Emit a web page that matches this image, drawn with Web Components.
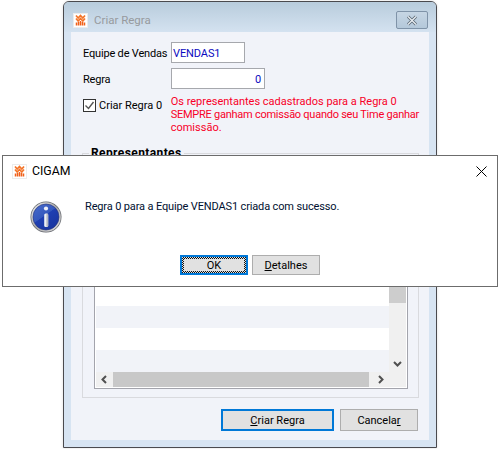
<!DOCTYPE html>
<html lang="pt-BR">
<head>
<meta charset="utf-8">
<title>Criar Regra</title>
<style>
  html, body { margin: 0; height: 100%; background: #fff; overflow: hidden; }
  body { font: 11px Roboto, "Liberation Sans", sans-serif; color: #000; }
</style>
</head>
<body>
<app-desktop>
  <rule-window>
    <rule-form></rule-form>
  </rule-window>
  <message-dialog title-text="CIGAM">Regra 0 para a Equipe VENDAS1 criada com sucesso.</message-dialog>
</app-desktop>

<script>
// Logo CIGAM, dipakai di dua title bar
const LOGO = `
  <svg width="15" height="15" viewBox="0 0 15 15" aria-hidden="true">
    <rect x="0.5" y="0.5" width="14" height="14" fill="#fff" stroke="#ececec"/>
    <path d="M3 2.500l2.200 2.500 2.300-2.500 2.300 2.500 2.200-2.500M3 5.500l2.200 2.500 2.300-2.500 2.300 2.500 2.200-2.500" fill="none" stroke="#f47428" stroke-width="1.700"/>
    <path d="M3.500 12.500V9.500M5.500 12.500V9M7.500 12.500V8M9.500 12.500V9M11.500 12.500V9.500" fill="none" stroke="#f0601a" stroke-width="1.500"/>
  </svg>`;

class AppDesktop extends HTMLElement {
  constructor() {
    super();
    this.attachShadow({ mode: 'open' });
  }

  connectedCallback() {
    this.shadowRoot.innerHTML = `
      <style>
        :host { display: block; position: relative; width: 500px; height: 449px; background: #fff; overflow: hidden; }
      </style>
      <slot></slot>
    `;
  }
}

class RuleWindow extends HTMLElement {
  constructor() {
    super();
    this.attachShadow({ mode: 'open' });
  }

  connectedCallback() {
    this.shadowRoot.innerHTML = `
      <style>
        :host {
          display: flex;
          flex-direction: column;
          position: absolute;
          left: 63px;
          top: 1px;
          width: 372px;
          height: 445px;
          border: 1px solid #4a4a4e;
          border-radius: 6px 6px 0 0;
          background: #d7e4f2;
          box-shadow: 0 0 3px rgba(0, 0, 0, .14);
        }
        .title {
          display: flex;
          align-items: center;
          box-sizing: border-box;
          height: 30px;
          padding: 6px 8px 0 9px;
          border-radius: 5px 5px 0 0;
          background: linear-gradient(#b8ccdc, #d4e2f0);
          color: #979a9e;
          font-size: 11.5px;
        }
        .title svg { margin-right: 6px; }
        .title span { flex: 1; }
        .close {
          display: flex;
          align-items: center;
          justify-content: center;
          box-sizing: border-box;
          width: 32px;
          height: 18px;
          border: 1px solid #7f93a8;
          border-radius: 2px;
          background: linear-gradient(#c6d6e4, #b4c8da);
        }
        .client { flex: 1; margin: 0 7px 7px; background: #f1f3f9; min-height: 0; display: flex; }
      </style>
      <div class="title">
        ${LOGO}
        <span>Criar Regra</span>
        <div class="close">
          <svg width="14" height="11" viewBox="0 0 14 11" style="margin:0">
            <path d="M3 1.500l8 8M11 1.500l-8 8" stroke="#5d6a76" stroke-width="3"/>
            <path d="M3 1.500l8 8M11 1.500l-8 8" stroke="#eef2f6" stroke-width="1.200"/>
          </svg>
        </div>
      </div>
      <div class="client"><slot></slot></div>
    `;
  }
}

class RuleForm extends HTMLElement {
  constructor() {
    super();
    this.attachShadow({ mode: 'open' });
  }

  connectedCallback() {
    this.shadowRoot.innerHTML = `
      <style>
        :host {
          display: flex;
          flex-direction: column;
          flex: 1;
          min-width: 0;
          box-sizing: border-box;
          padding: 10px 10px 9px 11px;
        }
        .row { display: flex; align-items: center; padding-left: 1px; height: 21px; margin-bottom: 5px; }
        .row label { width: 88px; letter-spacing: -.18px; padding-top: 1px; }
        .warn { display: flex; align-items: flex-start; padding-left: 1px; height: 39px; margin-top: 1px; }
        .warn p { margin: 0; white-space: nowrap; color: #f80028; line-height: 13px; }
        .warn p .tight { letter-spacing: -.25px; }
        .warn x-check { width: 88px; margin-top: 4px; }
        x-group { margin-top: 12px; flex: 1; min-height: 0; }
        .actions { display: flex; justify-content: flex-end; gap: 6px; margin-top: 11px; padding-right: 1px; }
      </style>
      <div class="row"><label>Equipe de Vendas</label><x-input width="74" value="VENDAS1"></x-input></div>
      <div class="row"><label>Regra</label><x-input width="94" value="0" align="right"></x-input></div>
      <div class="warn">
        <x-check>Criar Regra 0</x-check>
        <p>Os representantes cadastrados para a Regra 0<br><span class="tight">SEMPRE ganham comissão quando seu Time ganhar</span><br>comissão.</p>
      </div>
      <x-group label="Representantes"><x-grid></x-grid></x-group>
      <div class="actions">
        <x-button width="113" height="22" default><u>C</u>riar Regra</x-button>
        <x-button width="78" height="22">Cancela<u>r</u></x-button>
      </div>
    `;
  }
}

class XInput extends HTMLElement {
  constructor() {
    super();
    this.attachShadow({ mode: 'open' });
  }

  connectedCallback() {
    const width = this.getAttribute('width') || '74';
    const align = this.getAttribute('align') || 'left';
    this.shadowRoot.innerHTML = `
      <style>
        :host {
          display: block;
          box-sizing: border-box;
          width: ${width}px;
          height: 21px;
          padding: 0 3px 0 1px;
          border: 1px solid #a6a8ad;
          background: #fff;
          color: #0a0ac0;
          line-height: 21px;
          letter-spacing: -.1px;
          text-align: ${align};
        }
      </style>
      ${this.getAttribute('value') || ''}
    `;
  }
}

class XCheck extends HTMLElement {
  constructor() {
    super();
    this.attachShadow({ mode: 'open' });
  }

  connectedCallback() {
    this.shadowRoot.innerHTML = `
      <style>
        :host { display: flex; align-items: center; gap: 3px; height: 13px; }
        svg { flex: none; }
      </style>
      <svg width="13" height="13" viewBox="0 0 13 13" aria-hidden="true">
        <rect x="0.500" y="0.500" width="12" height="12" fill="#fff" stroke="#333"/>
        <path d="M2.500 6.500l3 3 5-6.500" fill="none" stroke="#555" stroke-width="1.400"/>
      </svg>
      <slot></slot>
    `;
  }
}

class XGroup extends HTMLElement {
  constructor() {
    super();
    this.attachShadow({ mode: 'open' });
  }

  connectedCallback() {
    this.shadowRoot.innerHTML = `
      <style>
        :host { display: flex; }
        fieldset {
          flex: 1;
          min-width: 0;
          margin: 0;
          padding: 6px 10px 8px 11px;
          border: 1px solid #d9dade;
          display: flex;
        }
        legend { padding: 0 2px; margin-left: -5px; font-size: 12px; font-weight: 700; letter-spacing: .4px; line-height: 14px; }
      </style>
      <fieldset>
        <legend>${this.getAttribute('label') || ''}</legend>
        <slot></slot>
      </fieldset>
    `;
  }
}

class XGrid extends HTMLElement {
  constructor() {
    super();
    this.attachShadow({ mode: 'open' });
  }

  connectedCallback() {
    // Baris selang-seling, dihitung dari bawah
    const rows = Array.from({ length: 10 }, (_, i) => `<div class="line ${i % 2 ? '' : 'odd'}"></div>`).join('');
    this.shadowRoot.innerHTML = `
      <style>
        :host {
          display: grid;
          grid-template-columns: 1fr 17px;
          grid-template-rows: 1fr 15px;
          flex: 1;
          min-width: 0;
          padding: 1px;
          border: 1px solid #a3a4ac;
          background: #fff;
        }
        .rows { display: flex; flex-direction: column; justify-content: flex-end; overflow: hidden; min-height: 0; }
        .line { flex: none; height: 22px; background: #f1f3f8; }
        .line.odd { background: #fff; }
        .corner { background: #f0f0f0; }
      </style>
      <div class="rows">${rows}</div>
      <x-scroll axis="v" before="0" after="52"></x-scroll>
      <x-scroll axis="h" before="0" after="3"></x-scroll>
      <div class="corner"></div>
    `;
  }
}

class XScroll extends HTMLElement {
  constructor() {
    super();
    this.attachShadow({ mode: 'open' });
  }

  connectedCallback() {
    const vertical = this.getAttribute('axis') === 'v';
    const before = this.getAttribute('before') || 0;
    const after = this.getAttribute('after') || 0;
    const chevron = (d) => `<svg width="9" height="9" viewBox="0 0 9 9"><path d="${d}" fill="none" stroke="#505050" stroke-width="2"/></svg>`;
    const first = vertical ? chevron('M1 6l3.500-3.500L8 6') : chevron('M6 1L2.500 4.500 6 8');
    const last = vertical ? chevron('M1 3l3.500 3.500L8 3') : chevron('M3 1l3.500 3.500L3 8');
    this.shadowRoot.innerHTML = `
      <style>
        :host {
          display: flex;
          flex-direction: ${vertical ? 'column' : 'row'};
          background: #f0f0f0;
          min-width: 0;
          min-height: 0;
        }
        .btn { flex: none; display: flex; align-items: center; justify-content: center; ${vertical ? 'height: 17px' : 'width: 17px'}; }
        .thumb { flex: 1; background: ${vertical ? '#cdcdcd' : '#c8c8c8'}; margin: ${vertical ? `${before}px 0 ${after}px` : `0 ${after}px 0 ${before}px`}; }
      </style>
      <div class="btn">${first}</div>
      <div class="thumb"></div>
      <div class="btn">${last}</div>
    `;
  }
}

class XButton extends HTMLElement {
  constructor() {
    super();
    this.attachShadow({ mode: 'open' });
  }

  connectedCallback() {
    const isDefault = this.hasAttribute('default');
    const focus = this.hasAttribute('focus');
    this.shadowRoot.innerHTML = `
      <style>
        :host {
          display: flex;
          box-sizing: border-box;
          width: ${this.getAttribute('width')}px;
          height: ${this.getAttribute('height')}px;
          border: ${isDefault ? '2px solid #0078d7' : '1px solid #adadad'};
          background: #e1e1e1;
        }
        .focus { flex: 1; display: flex; }
        .focus.on { padding: 2px; background: repeating-conic-gradient(#111 0 25%, #e1e1e1 0 50%) 0 0 / 2px 2px; }
        .face { flex: 1; display: flex; align-items: center; justify-content: center; background: #e1e1e1; }
      </style>
      <div class="focus ${focus ? 'on' : ''}"><div class="face"><span><slot></slot></span></div></div>
    `;
  }
}

class MessageDialog extends HTMLElement {
  constructor() {
    super();
    this.attachShadow({ mode: 'open' });
  }

  connectedCallback() {
    this.shadowRoot.innerHTML = `
      <style>
        :host {
          display: flex;
          flex-direction: column;
          position: absolute;
          left: 2px;
          top: 155px;
          width: 494px;
          height: 130px;
          border: 1px solid #6c6c6c;
          background: #fff;
        }
        .title { display: flex; align-items: center; height: 30px; padding: 0 10px 0 9px; font-size: 12.300px; }
        .title svg:first-child { margin-right: 5px; }
        .title span { flex: 1; }
        .body { display: flex; padding: 9px 0 0 27px; flex: 1; color: #001030; }
        .icon { margin: 6px 23px 0 0; flex: none; }
        .msg { line-height: 16px; margin-top: 4px; letter-spacing: -.14px; }
        .footer { display: flex; justify-content: center; gap: 4px; padding-bottom: 11px; }
      </style>
      <div class="title">
        ${LOGO}
        <span>${this.getAttribute('title-text') || ''}</span>
        <svg width="11" height="11" viewBox="0 0 11 11"><path d="M.5.500l10 10M10.500.500l-10 10" stroke="#000" fill="none"/></svg>
      </div>
      <div class="body">
        <svg class="icon" width="32" height="32" viewBox="0 0 32 32" aria-hidden="true">
          <defs>
            <linearGradient id="blue" x1="0" y1="0" x2=".7" y2="1">
              <stop offset="0" stop-color="#4a6dcc"/>
              <stop offset=".5" stop-color="#3558bd"/>
              <stop offset=".52" stop-color="#1f3fb2"/>
              <stop offset="1" stop-color="#1a36a0"/>
            </linearGradient>
            <linearGradient id="ring" x1="0" y1="0" x2="1" y2="1">
              <stop offset="0" stop-color="#f4f4f4"/>
              <stop offset=".5" stop-color="#a8a8a8"/>
              <stop offset="1" stop-color="#e4e4e4"/>
            </linearGradient>
          </defs>
          <circle cx="16" cy="16" r="15.500" fill="#62656c"/>
          <circle cx="16" cy="16" r="14.800" fill="url(#ring)"/>
          <circle cx="16" cy="16" r="13" fill="url(#blue)" stroke="#27337a" stroke-width=".6"/>
          <circle cx="16" cy="7.500" r="2.100" fill="#eef0f8"/>
          <rect x="14.200" y="12.500" width="4" height="13.500" rx="1.500" fill="#eef0f4"/>
          <rect x="16.400" y="12.500" width="1.800" height="13.500" rx=".9" fill="#b4b8c4"/>
        </svg>
        <div class="msg"><slot></slot></div>
      </div>
      <div class="footer">
        <x-button width="68" height="20" default focus>OK</x-button>
        <x-button width="68" height="20"><u>D</u>etalhes</x-button>
      </div>
    `;
  }
}

customElements.define('app-desktop', AppDesktop);
customElements.define('rule-window', RuleWindow);
customElements.define('rule-form', RuleForm);
customElements.define('x-input', XInput);
customElements.define('x-check', XCheck);
customElements.define('x-group', XGroup);
customElements.define('x-grid', XGrid);
customElements.define('x-scroll', XScroll);
customElements.define('x-button', XButton);
customElements.define('message-dialog', MessageDialog);
</script>
</body>
</html>
